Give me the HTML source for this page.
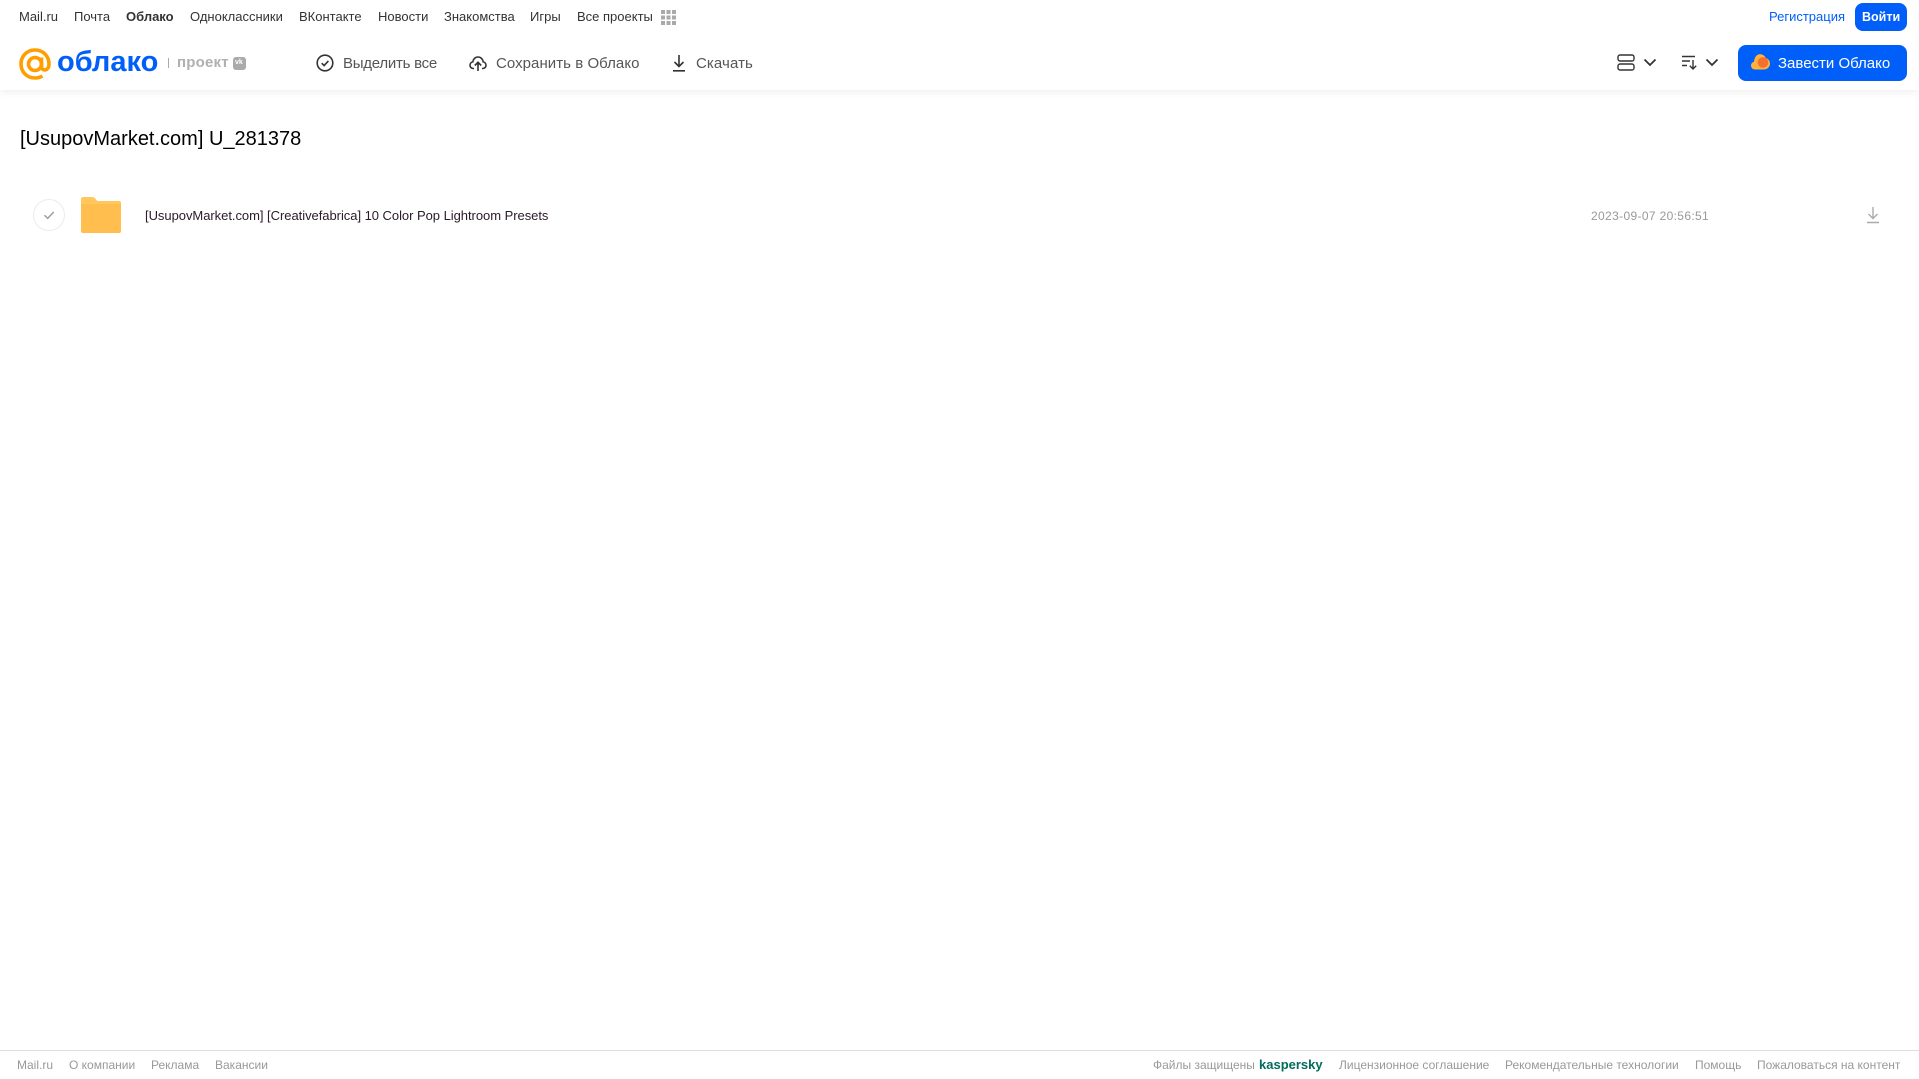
<!DOCTYPE html>
<html><head><meta charset="utf-8"><style>
html,body{margin:0;padding:0;background:#fff}
#p{position:relative;width:1919px;height:1079px;overflow:hidden;background:#fff;font-family:"Liberation Sans",sans-serif}
#p span{position:absolute;white-space:nowrap;line-height:16px}
#p svg{position:absolute;overflow:visible}
.n{font-size:13px;color:#333;top:9px}
.t{font-size:15px;color:#555;top:56px}
.f{font-size:12px;color:#999;top:1057px}
.b{position:absolute;background:#005ff9;border-radius:8px}
</style></head><body><div id="p">
<span class="n" style="left:19px">Mail.ru</span>
<span class="n" style="left:74px">Почта</span>
<span class="n" style="left:126px;font-weight:bold">Облако</span>
<span class="n" style="left:190px">Одноклассники</span>
<span class="n" style="left:299px">ВКонтакте</span>
<span class="n" style="left:378px">Новости</span>
<span class="n" style="left:444px">Знакомства</span>
<span class="n" style="left:530px">Игры</span>
<span class="n" style="left:577px">Все проекты</span>
<svg style="left:661px;top:10px" width="15" height="15" fill="#aaa"><rect x="0" y="0" width="4" height="4"/><rect x="5.500" y="0" width="4" height="4"/><rect x="11" y="0" width="4" height="4"/><rect x="0" y="5.500" width="4" height="4"/><rect x="5.500" y="5.500" width="4" height="4"/><rect x="11" y="5.500" width="4" height="4"/><rect x="0" y="11" width="4" height="4"/><rect x="5.500" y="11" width="4" height="4"/><rect x="11" y="11" width="4" height="4"/></svg>
<span class="n" style="left:1769px;color:#005ff9">Регистрация</span>
<div class="b" style="left:1855px;top:3px;width:52px;height:28px"></div>
<span class="n" style="left:1862px;color:#fff;font-weight:bold;font-size:12.500px">Войти</span>

<div style="position:absolute;left:0;top:0;width:1919px;height:90px;box-shadow:0 2px 8px rgba(0,0,0,.07)"></div>

<svg style="left:18px;top:47px" width="34" height="34" viewBox="0 0 34 34" fill="none" stroke="#ff9e00" stroke-width="3.600"><circle cx="17" cy="17" r="6.500"/><path d="M23.500 10.500v9c0 5 7.500 5 7.500-2.500C31 9 25 3 17 3S3 9 3 17s6 14 14 14c3 0 5.500-.8 7.500-2"/></svg>
<span style="left:57px;top:44px;line-height:36px;font-size:29px;font-weight:bold;color:#005ff9">облако</span>
<div style="position:absolute;left:168px;top:58px;width:1px;height:10px;background:#aaa"></div>
<span style="left:177px;top:55px;font-size:15px;font-weight:bold;color:#b0b0b0;letter-spacing:.2px">проект</span>
<div style="position:absolute;left:233px;top:57px;width:13px;height:13px;background:#aaa;border-radius:3px"></div>
<span style="left:235px;top:55px;font-size:7px;font-weight:bold;color:#fff">vk</span>

<svg style="left:316px;top:54px" width="18" height="18" viewBox="0 0 18 18" fill="none" stroke="#333" stroke-width="1.600"><circle cx="9" cy="9" r="7.800"/><path d="M5.700 9.200l2.400 2.400 4.300-4.700"/></svg>
<span class="t" style="left:343px;letter-spacing:-.25px">Выделить все</span>
<svg style="left:469px;top:54px" width="18" height="18" viewBox="0 0 18 18" fill="none" stroke="#333" stroke-width="1.600"><path d="M5 14.500H4.300C2.400 14.500 1 13 1 11.200c0-1.700 1.200-3 2.800-3.300C4.200 5 6.300 3 9 3s4.800 2 5.200 4.900c1.600.3 2.800 1.600 2.800 3.300 0 1.800-1.400 3.300-3.300 3.300H13M9 17V8.500M5.800 11.500L9 8.300l3.200 3.200"/></svg>
<span class="t" style="left:496px;letter-spacing:.05px">Сохранить в Облако</span>
<svg style="left:671px;top:54px" width="16" height="18" viewBox="0 0 16 18" fill="none" stroke="#333" stroke-width="1.600"><path d="M8 1v11M3.500 8L8 12.500 12.500 8M2 16.800h12"/></svg>
<span class="t" style="left:696px;letter-spacing:.1px">Скачать</span>

<svg style="left:1617px;top:54px" width="18" height="17" viewBox="0 0 18 17" fill="none" stroke="#333" stroke-width="1.400"><rect x="1" y="1" width="16" height="6" rx="2"/><rect x="1" y="10" width="16" height="6" rx="2"/></svg>
<svg style="left:1643px;top:58px" width="14" height="9" viewBox="0 0 14 9" fill="none" stroke="#333" stroke-width="1.800"><path d="M1.500 1.500L7 7l5.500-5.500"/></svg>
<svg style="left:1681px;top:55px" width="17" height="15" viewBox="0 0 17 15" fill="none" stroke="#333" stroke-width="1.400"><path d="M1 1.500h13M1 6h8M1 10.500h5M12 5v9M8.800 10.800l3.200 3.200 3.200-3.200"/></svg>
<svg style="left:1705px;top:58px" width="14" height="9" viewBox="0 0 14 9" fill="none" stroke="#333" stroke-width="1.800"><path d="M1.500 1.500L7 7l5.500-5.500"/></svg>
<div class="b" style="left:1738px;top:45px;width:169px;height:36px"></div>
<svg style="left:1751px;top:54px" width="19" height="16" viewBox="0 0 19 16"><path fill="#ffb13b" d="M4 15.500C1.800 15.500 0 13.700 0 11.500c0-1.900 1.300-3.400 3-3.800C3.300 3.300 6-.1 9.500.2 12 .4 14 2 15 4.200c2.400.5 4 2.600 4 5.300 0 3.300-2.700 6-6 6z"/><circle cx="12" cy="8.500" r="5.300" fill="#f4702c"/></svg>
<span class="t" style="left:1778px;color:#fff">Завести Облако</span>

<span style="left:20px;top:127px;line-height:24px;font-size:20px;color:#000">[UsupovMarket.com] U_281378</span>

<svg style="left:33px;top:199px" width="32" height="32" viewBox="0 0 32 32" fill="none"><circle cx="16" cy="16" r="15.500" stroke="#ececec"/><path d="M11.500 16.200l3.200 3.200 6-6.400" stroke="#999" stroke-width="1.400"/></svg>
<svg style="left:81px;top:197px" width="40" height="36" viewBox="0 0 40 36"><rect x="0" y="4" width="40" height="32" rx="2" fill="#ffbe4d"/><path fill="#ffc75c" d="M2 0h9c2 0 3 1 4 2.500 .6 1 1.300 1.500 2.500 1.500H38c1.100 0 2 .9 2 2v1H0V2C0 .9.900 0 2 0z"/></svg>
<span style="left:145px;top:208px;font-size:13px;color:#2a1a2a;letter-spacing:-.04px">[UsupovMarket.com] [Creativefabrica] 10 Color Pop Lightroom Presets</span>
<span style="left:1591px;top:208px;font-size:12px;color:#999;letter-spacing:.35px">2023-09-07 20:56:51</span>
<svg style="left:1866px;top:206px" width="14" height="18" viewBox="0 0 14 18" fill="none" stroke="#aaa" stroke-width="1.400"><path d="M7 1v11M2.500 8L7 12.500 11.500 8M1 16.500h12"/></svg>

<div style="position:absolute;left:0;top:1050px;width:1919px;height:1px;background:#ddd"></div>
<span class="f" style="left:17px">Mail.ru</span>
<span class="f" style="left:69px">О компании</span>
<span class="f" style="left:151px">Реклама</span>
<span class="f" style="left:215px">Вакансии</span>
<span class="f" style="left:1153px">Файлы защищены</span>
<span class="f" style="left:1259px;color:#006d5c;font-size:13px;font-weight:bold">kaspersky</span>
<span class="f" style="left:1339px">Лицензионное соглашение</span>
<span class="f" style="left:1505px">Рекомендательные технологии</span>
<span class="f" style="left:1695px">Помощь</span>
<span class="f" style="left:1757px">Пожаловаться на контент</span>
</div></body></html>
